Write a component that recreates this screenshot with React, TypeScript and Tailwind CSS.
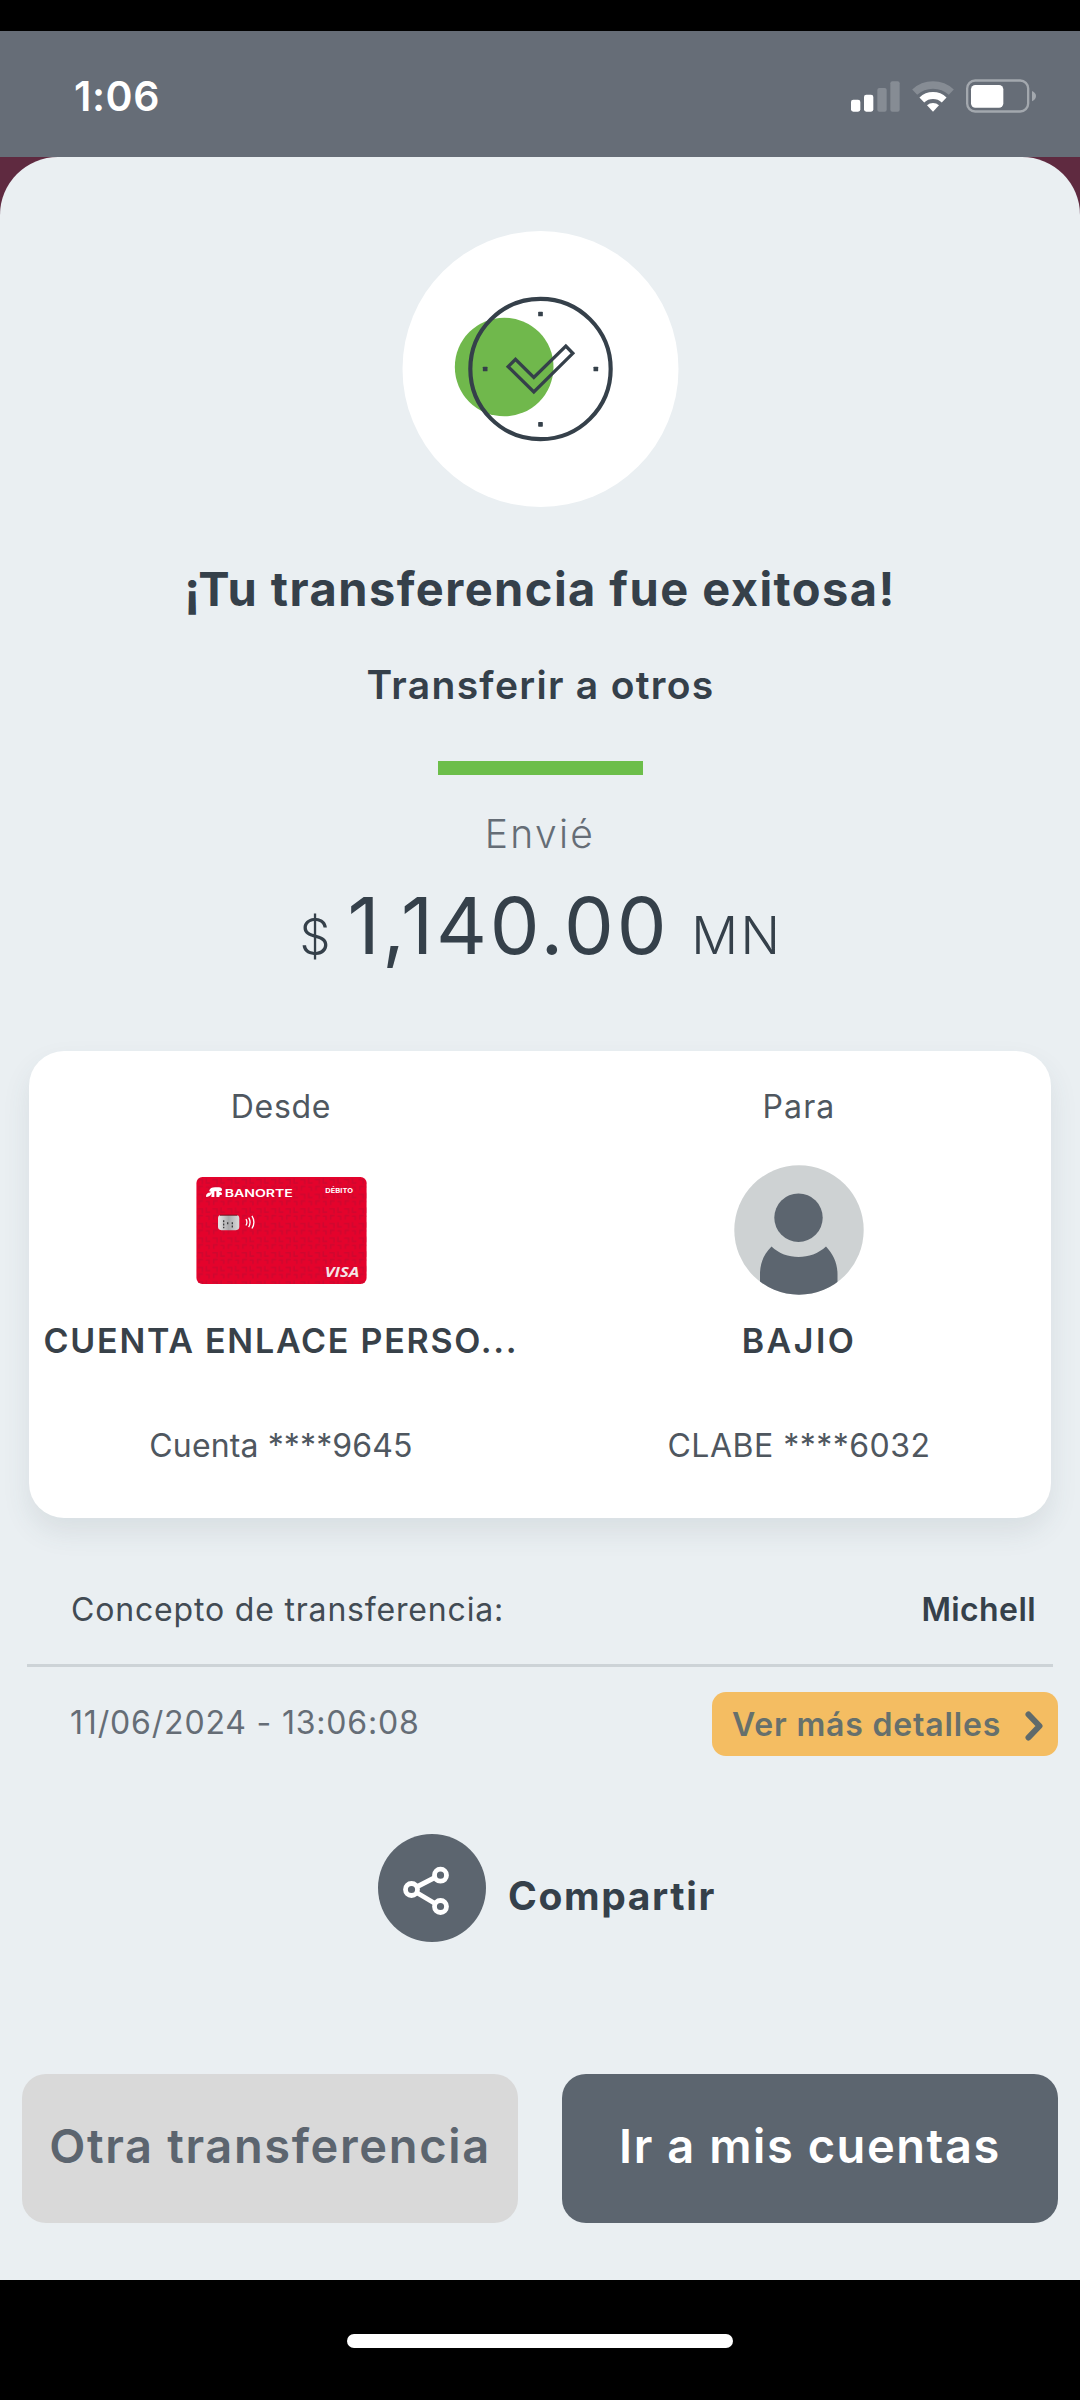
import type { ReactNode } from "react";

function SignalIcon() {
  return (
    <svg width="49" height="31" viewBox="0 0 147 93">
      <rect x="0" y="56" width="28" height="36" rx="7" fill="#fff" />
      <rect x="39" y="41" width="28" height="51" rx="7" fill="#fff" />
      <rect x="79" y="21" width="28" height="71" rx="6" fill="#868c94" />
      <rect x="118" y="1" width="28" height="91" rx="6" fill="#868c94" />
    </svg>
  );
}

function WifiIcon() {
  return (
    <svg width="42" height="31" viewBox="0 0 126 93" fill="none">
      <path d="M8 33.500A81 81 0 0 1 118 33.500" stroke="#868c94" strokeWidth="22" />
      <path d="M29.500 57A49 49 0 0 1 96.500 57" stroke="#fff" strokeWidth="21" />
      <path d="M63 92L45 73A27 27 0 0 1 81 73Z" fill="#fff" />
    </svg>
  );
}

function BatteryIcon() {
  return (
    <svg width="70" height="34" viewBox="0 0 210 102" fill="none">
      <rect x="3.500" y="4.500" width="183" height="93" rx="24" stroke="#a3a8ae" strokeWidth="7" />
      <rect x="15" y="18" width="97" height="68" rx="13" fill="#fff" />
      <path d="M198 36C206 39 210 45 210 51S206 63 198 67Z" fill="#a3a8ae" />
    </svg>
  );
}

function SuccessIcon() {
  return (
    <svg className="h-[276px] w-[277px]" viewBox="35 32 830 828" fill="none">
      <circle cx="450" cy="446" r="414" fill="#fff" />
      <circle cx="341" cy="440" r="148" fill="#70b84c" />
      <circle cx="450" cy="446" r="210.500" stroke="#35404a" strokeWidth="12.500" />
      <path
        d="M353 439L375 417L430 471L526 377L547 399L430 515Z"
        stroke="#35404a"
        strokeWidth="10"
      />
      <g fill="#35404a">
        <rect x="443" y="274" width="14" height="14" rx="2" />
        <rect x="277" y="439" width="14" height="14" rx="2" />
        <rect x="609" y="439" width="14" height="14" rx="2" />
        <rect x="443" y="605" width="14" height="14" rx="2" />
      </g>
    </svg>
  );
}

function BankCard() {
  return (
    <svg className="h-[107px] w-[171px]" viewBox="0 0 512 322">
      <defs>
        <pattern id="weave" width="44" height="44" patternUnits="userSpaceOnUse">
          <path
            d="M4 8H18V22M30 4V18H42M8 40V28H20M28 30H38V42"
            fill="none"
            stroke="#c20a30"
            strokeWidth="5"
            opacity="0.6"
          />
        </pattern>
        <linearGradient id="chip" x1="0" x2="1">
          <stop offset="0" stopColor="#e9e9e9" />
          <stop offset="0.5" stopColor="#a9a9ab" />
          <stop offset="1" stopColor="#dcdcdc" />
        </linearGradient>
      </defs>
      <rect width="512" height="322" rx="18" fill="#e4032c" />
      <rect width="512" height="322" rx="18" fill="url(#weave)" />
      <g fill="#fff">
        <path d="M38 43C40 34 47 31 56 31H68C74 31 77 34 77 38C77 41 74 43 70 43H68V45C73 45 77 47 77 51C77 53 75 54 72 54C70 54 69 56 69 60H60V43H54V60H45C45 55 46 52 46 49C43 56 37 60 29 60C28 52 33 47 42 47V43Z" />
        <text x="85" y="60" fontFamily="Inter" fontWeight="600" fontSize="31" textLength="205" lengthAdjust="spacingAndGlyphs">
          BANORTE
        </text>
        <text x="388" y="48" fontFamily="Inter" fontWeight="700" fontSize="20" textLength="83" lengthAdjust="spacingAndGlyphs">
          DÉBITO
        </text>
        <text x="386" y="302" fontFamily="Open Sans" fontStyle="italic" fontWeight="700" fontSize="45" textLength="104" lengthAdjust="spacingAndGlyphs" fill="#f6e4e7">
          VISA
        </text>
      </g>
      <rect x="65" y="114" width="64" height="46" rx="10" fill="url(#chip)" />
      <path d="M71 115H123" stroke="#6d1420" strokeWidth="3" />
      <path d="M82 130V154M108 136V156" stroke="#3c3c3e" strokeWidth="4" strokeDasharray="6 4" />
      <path d="M94 136V142" stroke="#3c3c3e" strokeWidth="4" />
      <path d="M149 127Q155 136 149 146M157 122Q166 136 157 151M167 117Q179 136 167 155" stroke="#fff" strokeWidth="4" fill="none" />
    </svg>
  );
}

function Avatar() {
  return (
    <svg className="h-[130px] w-[130px]" viewBox="0 0 130 130">
      <clipPath id="disc">
        <circle cx="65" cy="65" r="64.700" />
      </clipPath>
      <g clipPath="url(#disc)">
        <rect width="130" height="130" fill="#ced2d3" />
        <circle cx="64.500" cy="52.700" r="24.200" fill="#5c656f" />
        <path d="M37.500 81.500C52 95.500 77 95.500 92 81.500C99 89 103.500 98 103.500 109V130H26V109C26 98 30 89 37.500 81.500Z" fill="#5c656f" />
      </g>
    </svg>
  );
}

function ShareIcon() {
  return (
    <svg className="size-[108px]" viewBox="0 0 108 108" fill="none" stroke="#fff" strokeWidth="4.800">
      <circle cx="54" cy="54" r="54" fill="#5c656f" stroke="none" />
      <path d="M38.500 53L57 43.500M38.500 58.500L57 69.500" />
      <circle cx="33.500" cy="55.500" r="6" />
      <circle cx="62.500" cy="41.200" r="6" />
      <circle cx="62.500" cy="72.500" r="6" />
    </svg>
  );
}

function Party({ label, name, account, children }: { label: ReactNode; name: ReactNode; account: ReactNode; children: ReactNode }) {
  return (
    <div className="flex w-[518px] shrink-0 flex-col items-center pt-[36px] text-[32px] leading-[40px] text-[#4f575f]">
      <p>{label}</p>
      <div className="mt-[38px] flex h-[130px] items-center">{children}</div>
      <p className="mt-[26px] text-[34px] font-semibold whitespace-nowrap text-[#384149]">{name}</p>
      <p className="mt-[65px]">{account}</p>
    </div>
  );
}

export default function App() {
  return (
    <div className="flex h-[2400px] w-[1080px] flex-col overflow-hidden bg-black pt-[31px] font-['Inter',sans-serif] text-[#35404a]">
      <header className="flex h-[125.500px] shrink-0 items-center justify-between bg-[#666d77] pr-[44px] pl-[74px]">
        <span className="pt-[5px] text-[41px] leading-[48px] font-semibold tracking-[0.6px] text-white">1:06</span>
        <div className="flex items-center pt-[5px]">
          <SignalIcon />
          <span className="ml-[12px]"><WifiIcon /></span>
          <span className="ml-[12px]"><BatteryIcon /></span>
        </div>
      </header>

      <div className="h-[2123.500px] shrink-0 bg-[#5f2a40]">
        <main className="flex h-full flex-col rounded-t-[58px] bg-[#eaeff2] pt-[74.500px]">
          <div className="flex flex-col items-center">
            <SuccessIcon />
            <h1 className="mt-[54px] text-[47px] leading-[56px] font-bold tracking-[1.44px]">¡Tu transferencia fue exitosa!</h1>
            <h2 className="mt-[44px] pl-[1px] text-[39px] leading-[48px] font-semibold tracking-[1.3px]">Transferir a otros</h2>
            <div className="mt-[52px] h-[14px] w-[205px] bg-[#6cbe4a]" />
            <p className="mt-[35px] text-[39px] leading-[48px] font-[350] tracking-[2.3px] text-[#656d76]">Envié</p>
            <p className="mt-[19px] flex h-[96px] items-baseline pl-[2px] text-[52px] leading-[96px]">
              <span className="text-[49px] font-[350]">$</span>
              <span className="ml-[17px] text-[79px] font-[380] tracking-[2.8px]">1,140.00</span>
              <span className="ml-[22px] font-[350] tracking-[2.5px]">MN</span>
            </p>
          </div>

          <section className="mx-[29px] mt-[78px] flex h-[467px] shrink-0 justify-center rounded-[35px] bg-white shadow-[0_14px_28px_rgba(60,80,90,0.10)]">
            <Party
              label={<span className="tracking-[0.72px]">Desde</span>}
              name={<span className="tracking-[1.75px]">CUENTA ENLACE PERSO...</span>}
              account={<span className="tracking-[0.13px]">Cuenta ****9645</span>}
            >
              <BankCard />
            </Party>
            <Party
              label={<span className="tracking-[1.12px]">Para</span>}
              name={<span className="tracking-[2.45px]">BAJIO</span>}
              account={<span className="tracking-[0.49px]">CLABE ****6032</span>}
            >
              <Avatar />
            </Party>
          </section>

          <div className="mx-[27px] mt-[72px] flex items-center justify-between border-b-[3px] border-[#cdd3d7] pr-[17px] pb-[34px] pl-[44px] text-[32px] leading-[40px]">
            <span className="tracking-[0.82px] text-[#424b54]">Concepto de transferencia:</span>
            <span className="font-semibold tracking-[0.4px]">Michell</span>
          </div>

          <div className="mt-[25px] flex items-center justify-between pr-[22px] pl-[70px] text-[32px] leading-[40px]">
            <span className="-mt-[2px] tracking-[0.82px] text-[#656d76]">11/06/2024 - 13:06:08</span>
            <button className="flex h-[64px] w-[346px] items-center justify-between rounded-[14px] bg-[#f4bd62] pr-[14px] pl-[20px] font-semibold tracking-[0.82px] text-[#66706c]">
              <span className="pt-[2px]">Ver más detalles</span>
              <svg className="mt-[3px]" width="19" height="30" viewBox="0 0 19 30" fill="none" stroke="#5f6a6b" strokeWidth="6" strokeLinecap="round" strokeLinejoin="round">
                <path d="M3.500 3.500L14.500 15L3.500 26.500" />
              </svg>
            </button>
          </div>

          <div className="mt-[78px] ml-[378px] flex items-center">
            <ShareIcon />
            <span className="mt-[16px] ml-[22px] text-[39px] leading-[48px] font-bold tracking-[1.62px]">Compartir</span>
          </div>

          <div className="mt-[132px] flex justify-between px-[22px] text-[47px] leading-[56px] font-semibold">
            <button className="h-[149px] w-[496px] rounded-[24px] bg-[#d9d9d9] pb-[5px] tracking-[1.65px] text-[#5c656f]">Otra transferencia</button>
            <button className="h-[149px] w-[496px] rounded-[24px] bg-[#5c656f] pb-[5px] tracking-[1.55px] text-white">Ir a mis cuentas</button>
          </div>
        </main>
      </div>

      <div className="mt-[54px] h-[14px] w-[386px] shrink-0 self-center rounded-full bg-white" />
    </div>
  );
}
